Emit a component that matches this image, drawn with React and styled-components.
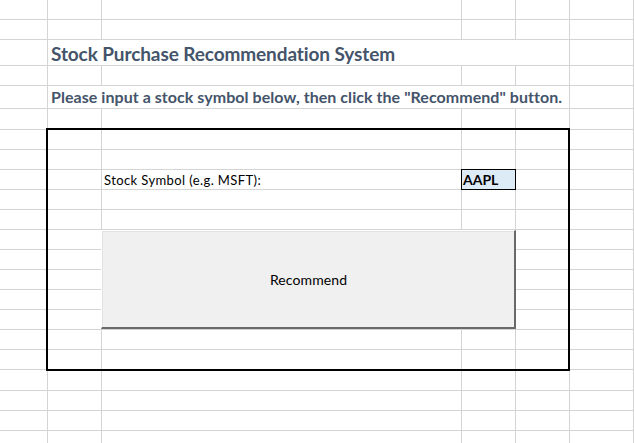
import React from "react";
import styled, { createGlobalStyle } from "styled-components";

const COLS = [48, 54, 360, 54, 54, 64];
const ROWS = [
  20, 20, 26, 20, 23, 21, 20, 20, 20, 20, 20, 20, 20, 20, 20, 20, 20, 20, 21,
  20, 20, 20,
];
const GRID_LINE = "#d4d4d4";

const GlobalStyle = createGlobalStyle`
  html, body {
    margin: 0;
    padding: 0;
    background: #ffffff;
    overflow: hidden;
  }
  body {
    font-family: Lato, "Open Sans", sans-serif;
  }
`;

const Sheet = styled.div`
  display: grid;
  grid-template-columns: ${COLS.map((w) => `${w}px`).join(" ")};
  grid-template-rows: ${ROWS.map((h) => `${h}px`).join(" ")};
  width: 634px;
  height: 443px;
  overflow: hidden;
  background: #ffffff;
`;

const Cell = styled.div`
  grid-row: ${(p) => p.$row};
  grid-column: ${(p) => p.$col} / span ${(p) => p.$span || 1};
  box-sizing: border-box;
  border-right: 1px solid ${GRID_LINE};
  border-bottom: 1px solid ${GRID_LINE};
  display: flex;
  align-items: flex-end;
  padding: 0 0 2px 3px;
  line-height: 1;
  white-space: nowrap;
  overflow: visible;
`;

const Title = styled.span`
  font-size: 19px;
  font-weight: 700;
  color: #44546a;
  letter-spacing: -0.1px;
`;

const Instructions = styled.span`
  font-size: 16px;
  font-weight: 700;
  color: #44546a;
  letter-spacing: 0.05px;
  margin-bottom: 1px;
`;

const Label = styled.span`
  font-size: 13px;
  letter-spacing: 0.4px;
  color: #000000;
  margin-left: -1px;
`;

const SymbolInput = styled.div`
  grid-row: 9;
  grid-column: 4;
  margin: -1px 0 0 -1px;
  box-sizing: border-box;
  border: 1px solid #000000;
  background: #ddebf7;
  z-index: 2;
  display: flex;
  align-items: flex-end;
  padding: 0 0 2px 1px;
  line-height: 1;
  font-size: 14px;
  font-weight: 700;
  color: #000000;
`;

const Frame = styled.div`
  grid-row: 7 / 19;
  grid-column: 2 / 6;
  margin: -2px 0 -1px -2px;
  border: 2px solid #000000;
  z-index: 3;
  pointer-events: none;
`;

const RecommendButton = styled.button`
  grid-row: 12 / 17;
  grid-column: 3 / 5;
  margin: 0 0 1px -1px;
  z-index: 4;
  box-sizing: border-box;
  background: #f0f0f0;
  border-top: 1px solid #ffffff;
  border-left: 1px solid #ffffff;
  border-right: 2px solid #696969;
  border-bottom: 2px solid #696969;
  box-shadow: inset 1px 1px 0 #e3e3e3;
  font-family: Lato, "Open Sans", sans-serif;
  font-size: 14px;
  letter-spacing: 0.1px;
  color: #000000;
  padding: 0 0 0 1px;
  cursor: pointer;
`;

const cellText = {
  "9-3": <Label>Stock Symbol (e.g. MSFT):</Label>,
};

function App() {
  const cells = [];
  ROWS.forEach((_, i) => {
    const row = i + 1;
    if (row === 3 || row === 5) {
      cells.push(<Cell key={`${row}-1`} $row={row} $col={1} />);
      cells.push(
        <Cell key={`${row}-2`} $row={row} $col={2} $span={4}>
          {row === 3 ? (
            <Title>Stock Purchase Recommendation System</Title>
          ) : (
            <Instructions>
              Please input a stock symbol below, then click the "Recommend"
              button.
            </Instructions>
          )}
        </Cell>
      );
      cells.push(<Cell key={`${row}-6`} $row={row} $col={6} />);
      return;
    }
    COLS.forEach((__, j) => {
      const col = j + 1;
      cells.push(
        <Cell key={`${row}-${col}`} $row={row} $col={col}>
          {cellText[`${row}-${col}`]}
        </Cell>
      );
    });
  });

  return (
    <>
      <GlobalStyle />
      <Sheet>
        {cells}
        <SymbolInput>AAPL</SymbolInput>
        <Frame />
        <RecommendButton type="button">Recommend</RecommendButton>
      </Sheet>
    </>
  );
}

export default App;
